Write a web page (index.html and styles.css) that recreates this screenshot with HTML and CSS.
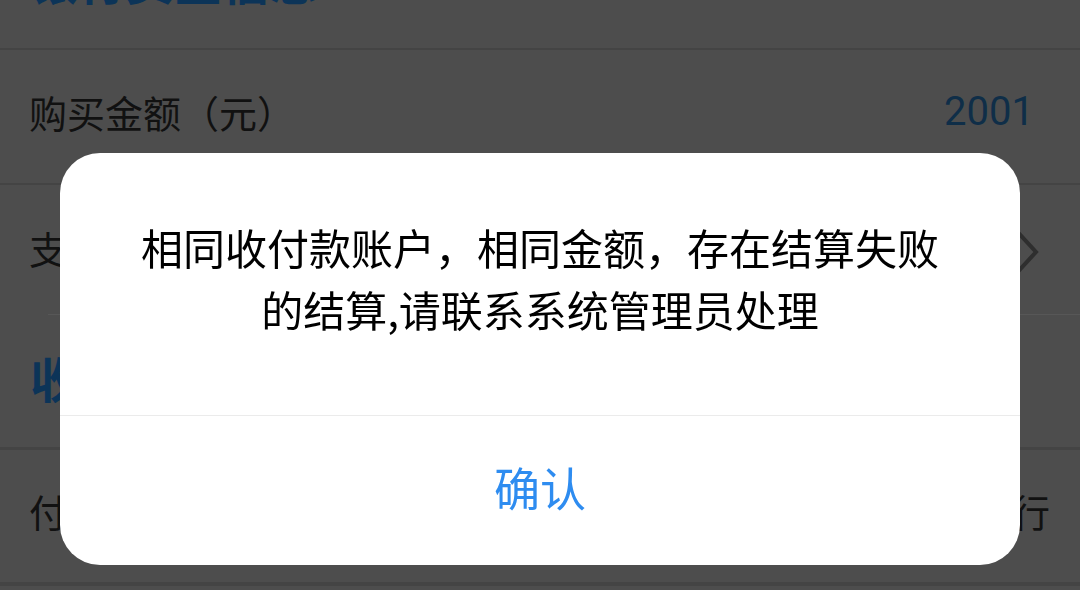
FILE: index.html
```html
<!DOCTYPE html>
<html lang="zh-CN">
<head>
<meta charset="utf-8">
<title>结算信息</title>
<link rel="stylesheet" href="styles.css">
</head>
<body>
<div class="page">
  <div class="section-title">银行资金信息</div>
  <div class="row">
    <span class="label">购买金额（元）</span>
    <span class="value">2001</span>
  </div>
  <div class="row row-tall inset">
    <span class="label">支付方式</span>
    <svg class="chevron" width="30" height="52" viewBox="0 0 30 52"><path d="M4 2 L26 26 L4 50" fill="none" stroke="#2e2e2e" stroke-width="4"/></svg>
  </div>
  <div class="section-title thick">收款信息</div>
  <div class="row thick">
    <span class="label">付款银行</span>
    <span class="value dark">中国工商银行</span>
  </div>
</div>

<div class="backdrop">
  <div class="dialog">
    <div class="message">相同收付款账户，相同金额，存在结算失败的结算,请联系系统管理员处理</div>
    <div class="actions">确认</div>
  </div>
</div>
</body>
</html>
```

FILE: styles.css
```css
html, body {
  margin: 0;
  padding: 0;
  width: 1080px;
  height: 590px;
  overflow: hidden;
  background: #4d4d4d;
  font-family: "Noto Sans CJK SC", "Noto Sans", sans-serif;
}

.page {
  margin-top: -82px;
  display: flex;
  flex-direction: column;
}

.section-title {
  height: 132px;
  box-sizing: border-box;
  display: flex;
  align-items: center;
  padding: 0 0 8px 30px;
  font-size: 48px;
  line-height: 1;
  font-weight: 700;
  color: #0c3458;
  border-bottom: 2px solid #444444;
}

.section-title.thick {
  height: 135px;
  border-bottom: 3px solid #444444;
}

.row {
  height: 135px;
  box-sizing: border-box;
  display: flex;
  align-items: center;
  justify-content: space-between;
  padding: 0 46px 10px 29px;
  border-bottom: 2px solid #444444;
}

.row-tall {
  height: 130px;
  padding-right: 40px;
  padding-bottom: 4px;
  border-bottom: none;
  position: relative;
}

.row-tall.inset::after {
  content: "";
  position: absolute;
  left: 48px;
  right: 0;
  bottom: 0;
  height: 1px;
  background: #575757;
}

.row.thick {
  height: 136px;
  padding-right: 30px;
  border-bottom: 4px solid #444444;
}

.label {
  font-size: 38px;
  line-height: 1;
  color: #111111;
}

.value {
  font-family: Roboto, "Noto Sans CJK SC", sans-serif;
  font-size: 40px;
  line-height: 1;
  color: #0f2e48;
}

.value.dark {
  font-family: "Noto Sans CJK SC", sans-serif;
  font-size: 38px;
  color: #111111;
}

.chevron {
  display: block;
  margin-top: 8px;
}

.backdrop {
  position: fixed;
  inset: 0;
  display: flex;
  justify-content: center;
  align-items: flex-end;
  padding-bottom: 25px;
  box-sizing: border-box;
}

.dialog {
  width: 960px;
  background: #ffffff;
  border-radius: 40px;
  overflow: hidden;
  display: flex;
  flex-direction: column;
}

.message {
  height: 263px;
  box-sizing: border-box;
  padding: 0 72px 12px;
  display: flex;
  align-items: center;
  justify-content: center;
  text-align: center;
  font-size: 42px;
  line-height: 62px;
  color: #000000;
  border-bottom: 1px solid #ebebeb;
}

.actions {
  height: 149px;
  box-sizing: border-box;
  padding-bottom: 10px;
  display: flex;
  align-items: center;
  justify-content: center;
  font-size: 46px;
  line-height: 1;
  color: #2e8cf0;
}
```
